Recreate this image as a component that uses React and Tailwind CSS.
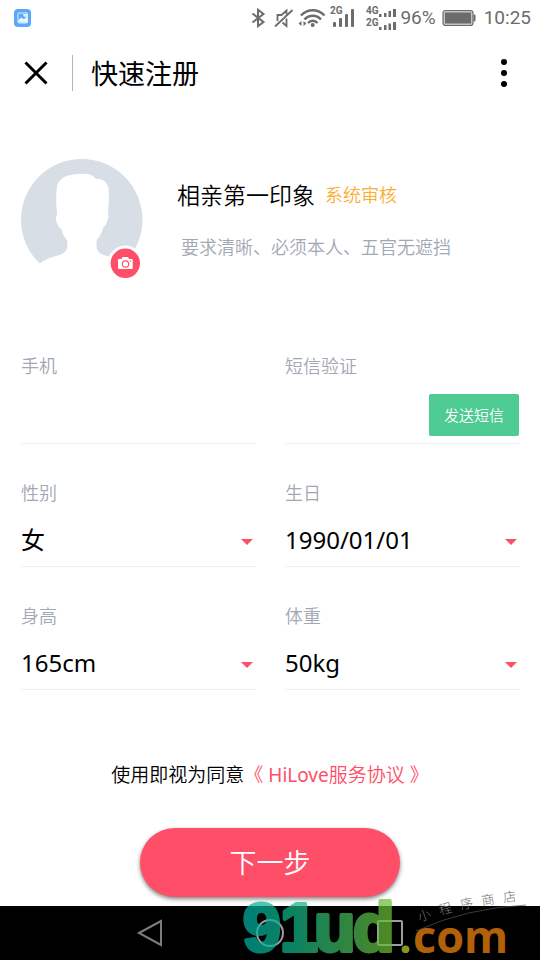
import React from "react";

function GalleryIcon() {
  return (
    <svg width="17" height="18" viewBox="0 0 17 18" aria-hidden="true">
      <rect width="17" height="18" rx="4" fill="#58a9f8" />
      <rect x="4" y="4" width="9.5" height="10" rx="1" fill="none" stroke="#e3f1ff" />
      <path d="M4.5 13.5V11l3-2.5 2 1.5 4-2v5.500z" fill="#e9f4ff" />
      <path d="M9 5h4v4l-2-1.500-1 .5z" fill="#fff" opacity=".8" />
    </svg>
  );
}

function BluetoothIcon() {
  return (
    <svg width="15" height="20" viewBox="0 0 15 20" fill="none" stroke="#6c6c6c" strokeWidth="2" aria-hidden="true">
      <path d="M1.500 5.500l11 8.500-5.500 4.200V1.800l5.500 4.200-11 8.500" />
    </svg>
  );
}

function MuteIcon() {
  return (
    <svg width="20" height="20" viewBox="0 0 20 20" fill="none" stroke="#6c6c6c" strokeWidth="1.800" aria-hidden="true">
      <path d="M1 18.500L18.500 2" />
      <path d="M3.500 13V7h4l5-4.500v4M12.500 10.500v7.500l-4-3.500" />
    </svg>
  );
}

function WifiIcon() {
  return (
    <svg width="28" height="20" viewBox="0 0 28 20" fill="none" stroke="#6c6c6c" strokeWidth="2.400" aria-hidden="true">
      <path d="M3 7.500c6.500-7 17-7 23.500 0M6.500 11.500c4.500-5 12-5 16.500 0M10 15c2.500-3 7-3 9.500 0" />
      <circle cx="14.700" cy="17" r="2" fill="#6c6c6c" stroke="none" />
      <path d="M3.500 13v5L.5 15.500zM5.500 13v5l3-2.500z" fill="#6c6c6c" stroke="none" />
    </svg>
  );
}

function SignalIcon() {
  return (
    <svg width="28" height="26" viewBox="0 0 28 26" fill="#6c6c6c" aria-hidden="true">
      <text x="0" y="9" fontSize="10" className="font-['Roboto'] font-bold">2G</text>
      <rect x="3" y="17" width="3" height="5" rx="1" />
      <rect x="9" y="13" width="3" height="9" rx="1" />
      <rect x="15" y="9" width="3" height="13" rx="1" />
      <rect x="21" y="4" width="3" height="18" rx="1" />
    </svg>
  );
}

function DualSignalIcon() {
  return (
    <svg width="31" height="26" viewBox="0 0 31 26" fill="#6c6c6c" aria-hidden="true">
      <text x="0" y="9" fontSize="10" className="font-['Roboto'] font-bold">4G</text>
      <text x="0" y="21" fontSize="10" className="font-['Roboto'] font-bold">2G</text>
      <path d="M13 9h2.500v3H13zM18 8h2.500v4H18zM22.500 6H25v6h-2.500zM27 4h3v8h-3z" />
      <path d="M13 22h2.500v3H13zM18 20h2.500v5H18zM22.500 18.500H25V25h-2.500zM27 17h3v8h-3z" />
    </svg>
  );
}

function BatteryIcon() {
  return (
    <svg width="34" height="18" viewBox="0 0 34 18" aria-hidden="true">
      <rect x="1" y="1.500" width="30" height="15" rx="2.500" fill="#c4c4c4" stroke="#6c6c6c" strokeWidth="1.200" />
      <rect x="3" y="3.500" width="26" height="11" fill="#6c6c6c" />
      <rect x="31.500" y="5.500" width="2" height="7" rx="1" fill="#6c6c6c" />
    </svg>
  );
}

function StatusBar() {
  return (
    <div className="flex h-9 items-center pr-[9px] pl-3.5 font-['Roboto',sans-serif] text-[19px] leading-6 font-normal text-[#6c6c6c]">
      <GalleryIcon />
      <div className="ml-auto flex items-center">
        <BluetoothIcon />
        <span className="ml-2 flex items-center gap-1">
          <MuteIcon />
          <WifiIcon />
          <SignalIcon />
        </span>
        <span className="ml-2">
          <DualSignalIcon />
        </span>
        <span className="ml-[3px]">96%</span>
        <span className="mr-2 ml-1.5">
          <BatteryIcon />
        </span>
        <span>10:25</span>
      </div>
    </div>
  );
}

function Header() {
  return (
    <header className="flex h-[73px] items-center px-6">
      <button type="button" aria-label="关闭">
        <svg width="24" height="24" viewBox="0 0 24 24" fill="none" stroke="#000" strokeWidth="3" aria-hidden="true">
          <path d="M1.500 1.500l21 21M22.500 1.500l-21 21" />
        </svg>
      </button>
      <span className="ml-6 h-9 w-px bg-[#b5b5b5]" />
      <h1 className="ml-[18px] pt-0.5 text-[27px] leading-9 font-normal">快速注册</h1>
      <button type="button" aria-label="更多" className="ml-auto px-2">
        <svg width="8" height="30" viewBox="0 0 8 30" aria-hidden="true">
          <circle cx="4" cy="4" r="3" />
          <circle cx="4" cy="15" r="3" />
          <circle cx="4" cy="26" r="3" />
        </svg>
      </button>
    </header>
  );
}

function Avatar() {
  return (
    <button type="button" aria-label="上传照片" className="shrink-0">
      <svg width="122" height="122" viewBox="0 0 122 122" aria-hidden="true">
        <circle cx="60.700" cy="60.700" r="60.700" fill="#d8dee5" />
        <path
          d="M19.300 104.300C25 99.500 33 97.500 40 95.500Q46 93 46.300 87V81.500Q42 77 40.500 70.500C37.500 68 35.500 65 35 60.500Q34.700 57 36.300 55.500C34.800 47 34.800 32 36.500 25.500C39.500 18 48 14.700 61.300 14.700C69 14.700 72.500 16.500 74.500 19.700C83 20 85.500 22.500 87.300 28.500C88.800 38 87.500 47 87 55Q88 58 86.500 61Q85 66.500 82 69Q80.500 76 76 80.500Q75 85 75.700 89Q77 94 82 95.800L92 99V122H0V104.300z"
          fill="#fff"
        />
        <circle cx="104.300" cy="104.300" r="17.700" fill="#fff" />
        <circle cx="104.300" cy="104.300" r="14.700" fill="#ff4e68" />
        <path d="M98 100h2.500l1-2h5.500l1 2h2.700q1 0 1 1v8q0 1-1 1H98q-1 0-1-1v-8q0-1 1-1z" fill="#fff" />
        <circle cx="104.500" cy="105" r="3.200" fill="none" stroke="#ff4e68" strokeWidth="1.200" />
        <circle cx="109.500" cy="102" r=".7" fill="#ff4e68" />
      </svg>
    </button>
  );
}

function Profile() {
  return (
    <section className="flex items-start px-[21px] pt-[50px]">
      <Avatar />
      <div className="pt-5 pl-[34px]">
        <div className="flex items-center gap-2.5">
          <h2 className="text-[23px] leading-8 font-[350]">相亲第一印象</h2>
          <span className="text-[18px] leading-8 text-[#fbad32]">系统审核</span>
        </div>
        <p className="mt-6 pl-1 text-[18px] leading-6 text-[#a2a8b3]">要求清晰、必须本人、五官无遮挡</p>
      </div>
    </section>
  );
}

function Field({ id, label, children }) {
  return (
    <div className="flex flex-col">
      <label htmlFor={id} className="text-[18px] leading-6 text-[#a2a8b3]">
        {label}
      </label>
      <div className="mt-3.5 border-b border-[#efefef]">{children}</div>
    </div>
  );
}

function SelectField({ id, label, value }) {
  return (
    <Field id={id} label={label}>
      <div className="grid items-center">
        <select
          id={id}
          defaultValue={value}
          className="col-start-1 row-start-1 h-[47px] w-full appearance-none bg-transparent pb-1.5 text-[24px] leading-9 font-normal text-black outline-none"
        >
          <option>{value}</option>
        </select>
        <svg
          width="12"
          height="6"
          viewBox="0 0 12 6"
          className="pointer-events-none col-start-1 row-start-1 mr-0.5 mb-0.5 justify-self-end"
          aria-hidden="true"
        >
          <path d="M0 0h12L6 6z" fill="#ff4e68" />
        </svg>
      </div>
    </Field>
  );
}

function RegisterForm() {
  return (
    <div className="mt-[73px] grid grid-cols-2 gap-x-[30px] gap-y-[37px] px-[21px]">
      <Field id="phone" label="手机">
        <input id="phone" type="tel" className="block h-[51px] w-full bg-transparent text-[24px] outline-none" />
      </Field>
      <Field id="code" label="短信验证">
        <div className="flex h-[51px] items-start pt-0.5">
          <input id="code" type="text" className="h-[42px] w-0 flex-1 bg-transparent text-[24px] outline-none" />
          <button type="button" className="h-[42px] w-[90px] rounded-xs bg-[#4dcb92] text-[15px] leading-6 text-white">
            发送短信
          </button>
        </div>
      </Field>
      <SelectField id="gender" label="性别" value="女" />
      <SelectField id="birthday" label="生日" value="1990/01/01" />
      <SelectField id="height" label="身高" value="165cm" />
      <SelectField id="weight" label="体重" value="50kg" />
    </div>
  );
}

function SystemNav() {
  return (
    <nav className="mt-auto flex h-[54px] items-center justify-center bg-black">
      <button type="button" aria-label="返回" className="flex w-[120px] justify-center">
        <svg width="28" height="28" viewBox="0 0 28 28" fill="none" stroke="#7d7d7d" strokeWidth="2" aria-hidden="true">
          <path d="M3 14L25 2v24z" />
        </svg>
      </button>
      <button type="button" aria-label="主页" className="flex w-[120px] justify-center">
        <svg width="28" height="28" viewBox="0 0 28 28" fill="none" stroke="#9d9d9d" strokeWidth="2" aria-hidden="true">
          <circle cx="14" cy="14" r="13" />
        </svg>
      </button>
      <button type="button" aria-label="最近任务" className="flex w-[120px] justify-center">
        <svg width="28" height="28" viewBox="0 0 28 28" fill="none" stroke="#9d9d9d" strokeWidth="2" aria-hidden="true">
          <rect x="2" y="2" width="24" height="24" rx="1" />
        </svg>
      </button>
    </nav>
  );
}

function Watermark() {
  return (
    <svg width="300" height="80" viewBox="0 0 300 80" className="pointer-events-none absolute right-0 bottom-0">
      <defs>
        <linearGradient id="brand" gradientUnits="userSpaceOnUse" x1="0" y1="0" x2="155" y2="0">
          <stop offset="0" stopColor="#00b0a8" />
          <stop offset="0.35" stopColor="#12b486" />
          <stop offset="1" stopColor="#72be30" />
        </linearGradient>
        <path id="arc" d="M180 42Q222 25 296 19" />
      </defs>
      <g opacity="0.72">
        <text
          x="3 40 74 113"
          y="71"
          fontSize="68"
          fill="url(#brand)"
          stroke="url(#brand)"
          strokeWidth="4"
          strokeLinejoin="round"
          className="font-['Liberation_Sans',sans-serif] font-bold"
        >
          91ud
        </text>
        <text x="159" y="73" fontSize="45" fill="#f5870f" className="font-['Open_Sans',sans-serif] font-bold">
          <tspan fill="#bfd030">.</tspan>
          <tspan x="173">com</tspan>
        </text>
      </g>
      <path d="M176 51Q226 28 286 25" fill="none" stroke="#555" strokeWidth="0.700" />
      <text fontSize="13" fill="#777" className="font-['Noto_Sans_CJK_SC',sans-serif] font-light">
        <textPath href="#arc">{"小\u00a0\u00a0\u00a0程\u00a0\u00a0\u00a0序\u00a0\u00a0\u00a0商\u00a0\u00a0\u00a0店"}</textPath>
      </text>
    </svg>
  );
}

export default function App() {
  return (
    <div className="relative flex min-h-screen flex-col bg-white font-['Noto_Sans','Noto_Sans_CJK_SC',sans-serif] font-[350] text-black">
      <StatusBar />
      <Header />
      <main className="flex flex-col pb-[9px]">
        <Profile />
        <RegisterForm />
        <p className="mt-[69px] text-center text-[19px] leading-8">
          使用即视为同意
          <a href="#agreement" className="text-[#ff4e68]">
            《 <span className="font-normal">HiLove</span>服务协议 》
          </a>
        </p>
        <button
          type="button"
          className="mt-[37px] h-[69px] w-[260px] self-center rounded-full bg-[#ff4e68] text-[27px] leading-9 text-white shadow-[0_2px_4px_rgba(0,0,0,0.5)]"
        >
          下一步
        </button>
      </main>
      <SystemNav />
      <Watermark />
    </div>
  );
}
